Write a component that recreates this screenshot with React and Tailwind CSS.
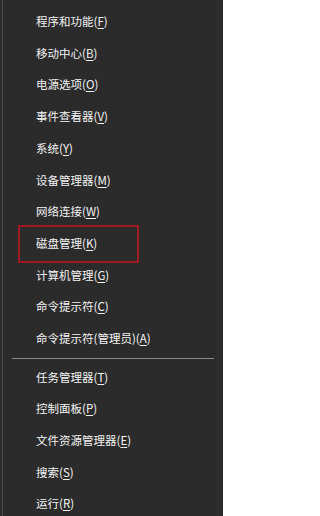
import React from 'react'

const groups = [
  [
    ['程序和功能', 'F'],
    ['移动中心', 'B'],
    ['电源选项', 'O'],
    ['事件查看器', 'V'],
    ['系统', 'Y'],
    ['设备管理器', 'M'],
    ['网络连接', 'W'],
    ['磁盘管理', 'K', true],
    ['计算机管理', 'G'],
    ['命令提示符', 'C'],
    ['命令提示符(管理员)', 'A'],
  ],
  [
    ['任务管理器', 'T'],
    ['控制面板', 'P'],
    ['文件资源管理器', 'E'],
    ['搜索', 'S'],
    ['运行', 'R'],
  ],
]

const MenuItem = ({ label, hotkey, marked }) => (
  <div className="relative flex h-[31.7px] items-center pl-[33px]">
    {marked && (
      <div className="absolute left-[15px] top-[-3px] bottom-[-3px] w-[121px] border-2 border-[#9e1b22]" />
    )}
    <span className="text-[11.5px] leading-none text-[#f4f4f4]">
      {label}(<span className="underline underline-offset-2">{hotkey}</span>)
    </span>
  </div>
)

export default function App() {
  return (
    <div
      className="h-[516px] w-[223px] overflow-hidden bg-[#2b2b2b] pl-[2px]"
      style={{ fontFamily: '"Noto Sans CJK SC", "Noto Sans", sans-serif' }}
    >
      <div className="h-full border-l border-[#4c4c4c] pt-[6px]">
        {groups.map((items, i) => (
          <div key={i}>
            {i > 0 && (
              <div className="flex h-[7px] items-center pl-[9px] pr-[9px]">
                <div className="h-px w-full bg-[#8a8a8a]" />
              </div>
            )}
            {items.map(([label, hotkey, marked]) => (
              <MenuItem key={label} label={label} hotkey={hotkey} marked={marked} />
            ))}
          </div>
        ))}
      </div>
    </div>
  )
}
